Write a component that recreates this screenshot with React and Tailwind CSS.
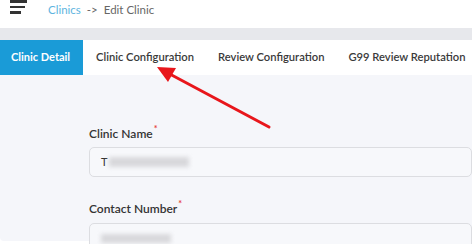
export default function App() {
  const tabs = ["Clinic Configuration", "Review Configuration", "G99 Review Reputation"];

  return (
    <div className="relative w-[474px] h-[244px] overflow-hidden bg-white font-['Lato',sans-serif] text-[#333]">
      {/* top bar */}
      <div className="flex items-start h-[28px]">
        <div className="flex flex-col gap-[3px] pl-[10px] pt-[0px] w-[38px]">
          <span className="block h-[2.5px] w-[17px] bg-[#333]" />
          <span className="block h-[2.5px] w-[15px] bg-[#333]" />
          <span className="block h-[2.5px] w-[11px] bg-[#333]" />
        </div>
        <div className="flex items-center gap-[6px] pl-[10px] pt-[1px] text-[11.5px]">
          <span className="text-[#5db4e0]">Clinics</span>
          <span className="text-[#666]">-&gt;</span>
          <span className="text-[#666]">Edit Clinic</span>
        </div>
      </div>

      <div className="h-[12px] w-[472px] bg-[#e7e8ec]" />

      {/* tabs */}
      <div className="flex h-[35px] w-[472px] items-stretch overflow-hidden bg-white text-[11.2px] font-semibold whitespace-nowrap">
        <div className="flex shrink-0 items-center px-[11px] w-[83px] bg-[#1a9bd7] text-white font-bold text-[11px]">Clinic Detail</div>
        {tabs.map((t) => (
          <div key={t} className="flex shrink-0 items-center pl-[13px] pr-[11px] text-[#3a3a3a]">
            {t}
          </div>
        ))}
      </div>

      {/* panel */}
      <div className="w-[472px] h-[166px] bg-[#f5f6fa] rounded-bl-[4px] pl-[89px] pt-[50px]">
        <div className="text-[12px] font-semibold text-[#333] flex">
          Clinic Name<span className="text-[#e53935] text-[9px] -mt-[3px] ml-[1px]">*</span>
        </div>
        <div className="mt-[4px] h-[30px] rounded-[5px] border border-[#dcdde1] bg-[#f7f8fb] flex items-center pl-[11px] text-[11px]">
          <span>T</span>
          <span className="ml-[1px] h-[10px] w-[80px] bg-[#d8d8db] blur-[2px]" />
        </div>
        <div className="mt-[23px] text-[12px] font-semibold text-[#333] flex">
          Contact Number<span className="text-[#e53935] text-[9px] -mt-[3px] ml-[1px]">*</span>
        </div>
        <div className="mt-[5px] h-[30px] rounded-[5px] border border-[#dcdde1] bg-[#f7f8fb] flex items-center pl-[11px]">
          <span className="h-[9px] w-[70px] bg-[#d8d8db] blur-[2px]" />
        </div>
      </div>

      {/* annotation arrow */}
      <svg className="absolute left-0 top-0 pointer-events-none" width="474" height="244">
        <line x1="269" y1="127" x2="166" y2="72" stroke="#e8161b" strokeWidth="3" strokeLinecap="round" />
        <polygon points="157,67 176,68 168,82" fill="#e8161b" />
      </svg>
    </div>
  );
}
